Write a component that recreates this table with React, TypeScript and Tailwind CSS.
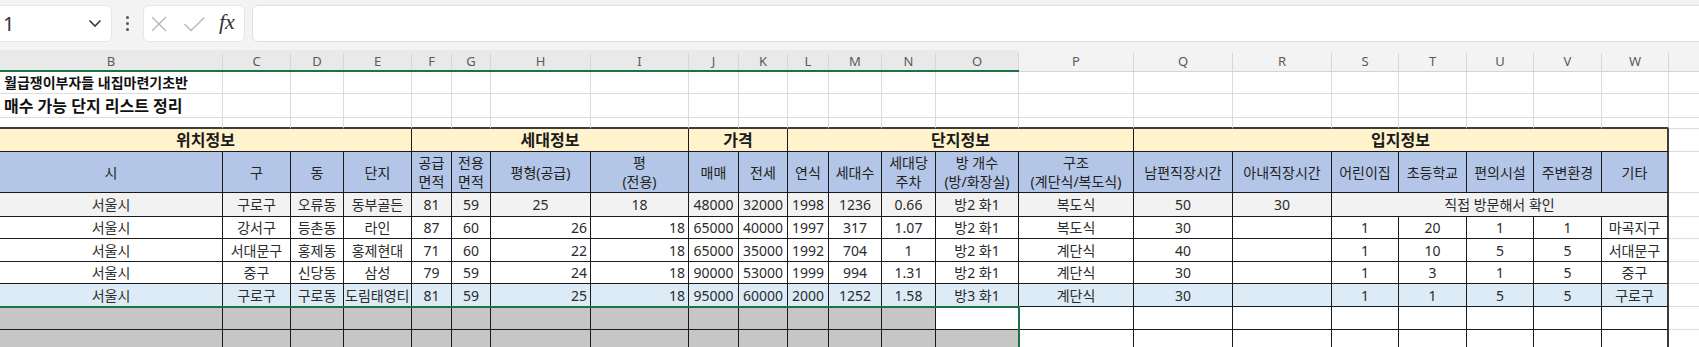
import React from "react";

type Cell = { v?: string; w?: string; align?: "c" | "r" | "l"; cls?: string };

const W = [
  "w-[223px]", "w-[68px]", "w-[53px]", "w-[68px]", "w-[40px]", "w-[39px]", "w-[100px]", "w-[98px]",
  "w-[50px]", "w-[49px]", "w-[41px]", "w-[53px]", "w-[54px]", "w-[83px]", "w-[115px]", "w-[99px]",
  "w-[99px]", "w-[67px]", "w-[68px]", "w-[67px]", "w-[68px]", "w-[67px]",
];
const LETTERS = "BCDEFGHIJKLMNOPQRSTUVW".split("");
const XW = "w-[67px]";

function XCell({ h }: { h: string }) {
  return <div className={`${XW} ${h} shrink-0 border-r border-b border-[#dcdcdc] bg-white`} />;
}

function TableRow({
  cells,
  h,
  bg,
  text = "text-[14px] text-[#2b2b2b]",
  border = "border-[#1a1a1a]",
}: {
  cells: (string | Cell)[];
  h: string;
  bg: string;
  text?: string;
  border?: string;
}) {
  let col = 0;
  return (
    <div className="flex">
      {cells.map((c, i) => {
        const cell: Cell = typeof c === "string" ? { v: c } : c;
        const w = cell.w ?? W[col];
        col += 1;
        const last = i === cells.length - 1;
        const align =
          cell.align === "r" ? "justify-end pr-[3px]" : cell.align === "l" ? "justify-start pl-[1px]" : "justify-center";
        return (
          <div
            key={i}
            className={`${w} ${h} shrink-0 flex items-center ${align} overflow-hidden whitespace-nowrap border-b ${border} ${
              last ? "border-r-2 border-r-[#3c3c3c]" : "border-r"
            } ${cell.cls ?? bg} ${text}`}
          >
            {cell.v}
          </div>
        );
      })}
      <XCell h={h} />
    </div>
  );
}

const dataRows: { bg: string; h: string; cells: (string | Cell)[] }[] = [
  {
    bg: "bg-[#f2f2f2]",
    h: "h-[24px]",
    cells: [
      "서울시", "구로구", "오류동", "동부골든", "81", "59", "25", "18", "48000", "32000", "1998", "1236", "0.66",
      "방2 화1", "복도식", "50", "30", { v: "직접 방문해서 확인", w: "w-[337px]" },
    ],
  },
  {
    bg: "bg-white",
    h: "h-[22px]",
    cells: [
      "서울시", "강서구", "등촌동", "라인", "81".replace("81", "87"), "60", { v: "26", align: "r" }, { v: "18", align: "r" },
      "65000", "40000", "1997", "317", "1.07", "방2 화1", "복도식", "30", "", "1", "20", "1", "1", "마곡지구",
    ],
  },
  {
    bg: "bg-white",
    h: "h-[23px]",
    cells: [
      "서울시", "서대문구", "홍제동", "홍제현대", "71", "60", { v: "22", align: "r" }, { v: "18", align: "r" },
      "65000", "35000", "1992", "704", "1", "방2 화1", "계단식", "40", "", "1", "10", "5", "5", "서대문구",
    ],
  },
  {
    bg: "bg-white",
    h: "h-[22px]",
    cells: [
      "서울시", "중구", "신당동", "삼성", "79", "59", { v: "24", align: "r" }, { v: "18", align: "r" },
      "90000", "53000", "1999", "994", "1.31", "방2 화1", "계단식", "30", "", "1", "3", "1", "5", "중구",
    ],
  },
  {
    bg: "bg-[#ddebf7]",
    h: "h-[23px]",
    cells: [
      "서울시", "구로구", "구로동", { v: "도림태영티", align: "l", cls: "bg-[#ddebf7] text-[13.4px]" }, "81", "59",
      { v: "25", align: "r" }, { v: "18", align: "r" },
      "95000", "60000", "2000", "1252", "1.58", "방3 화1", "계단식", "30", "", "1", "1", "5", "5", "구로구",
    ],
  },
];

function selectedRow(activeWhite: boolean): (string | Cell)[] {
  return W.map((_, i) => {
    if (i <= 13) {
      if (i === 13 && activeWhite) return { v: "", cls: "bg-white" };
      return { v: "", cls: "bg-[#c6c6c6]" };
    }
    return { v: "", cls: "bg-white" };
  });
}

function Toolbar() {
  return (
    <div className="h-[50px] bg-[#f3f3f3] flex items-start pt-[5px]">
      <div className="ml-[-6px] w-[118px] h-[37px] shrink-0 bg-white rounded-md border border-[#e6e6e6] flex items-center pl-[8px] pr-[9px]">
        <span className="text-[20px] text-[#333] font-['Noto_Sans',sans-serif] leading-none">1</span>
        <div className="flex-1" />
        <svg width="14" height="9" viewBox="0 0 14 9" className="shrink-0">
          <polyline points="1.5,1.5 7,7 12.5,1.5" fill="none" stroke="#3a3a3a" strokeWidth="1.6" />
        </svg>
      </div>
      <div className="w-[31px] h-[37px] shrink-0 flex flex-col items-center justify-center gap-[3px]">
        <div className="w-[3px] h-[3px] rounded-full bg-[#555]" />
        <div className="w-[3px] h-[3px] rounded-full bg-[#555]" />
        <div className="w-[3px] h-[3px] rounded-full bg-[#555]" />
      </div>
      <div className="w-[102px] h-[37px] shrink-0 bg-white rounded-md border border-[#e6e6e6] flex items-center">
        <svg width="18" height="16" viewBox="0 0 18 16" className="ml-[6px] shrink-0">
          <line x1="2" y1="1" x2="16" y2="15" stroke="#b9b9b9" strokeWidth="1.4" />
          <line x1="16" y1="1" x2="2" y2="15" stroke="#b9b9b9" strokeWidth="1.4" />
        </svg>
        <svg width="23" height="16" viewBox="0 0 23 16" className="ml-[15px] shrink-0">
          <polyline points="1.5,8 8,14.5 21.5,1.5" fill="none" stroke="#b9b9b9" strokeWidth="1.4" />
        </svg>
        <span className="ml-[13px] text-[22px] italic text-[#333] font-['Liberation_Serif',serif] leading-none pb-[3px]">
          fx
        </span>
      </div>
      <div className="ml-[7px] flex-1 h-[37px] bg-white rounded-md border border-[#e0e0e0] mr-[-8px]" />
    </div>
  );
}

function ColumnHeaders() {
  return (
    <div className="flex bg-[#f3f3f3]">
      {LETTERS.map((l, i) => {
        const sel = i <= 13;
        return (
          <div
            key={l}
            className={`${W[i]} h-[22px] shrink-0 pt-[3px] ${
              sel ? "border-b-2 border-b-[#1e7145] bg-[#e9e9e9]" : "border-b border-b-[#d4d4d4] bg-[#f3f3f3]"
            }`}
          >
            <div className="h-full border-r border-[#d6d6d6] flex items-center justify-center text-[13px] text-[#5a5a5a] font-['Noto_Sans',sans-serif]">
              {l}
            </div>
          </div>
        );
      })}
      <div className={`${XW} h-[22px] shrink-0 pt-[3px] border-b border-b-[#d4d4d4]`}>
        <div className="h-full border-r border-[#d6d6d6]" />
      </div>
    </div>
  );
}

function PlainRow({ h, first, firstCls, bottom }: { h: string; first?: string; firstCls?: string; bottom?: boolean }) {
  return (
    <div className="flex bg-white">
      {W.map((w, i) => (
        <div
          key={i}
          className={`${w} ${h} shrink-0 border-r border-[#dcdcdc] ${
            bottom ? "border-b-2 border-b-[#3c3c3c]" : "border-b"
          } ${i === 0 ? "overflow-visible whitespace-nowrap flex items-center pl-[4px]" : ""}`}
        >
          {i === 0 && first ? <span className={firstCls}>{first}</span> : null}
        </div>
      ))}
      <XCell h={h} />
    </div>
  );
}

export default function App() {
  const subHeaders: (string | Cell)[] = [
    "시", "구", "동", "단지",
    { v: "공급\n면적" }, { v: "전용\n면적" }, "평형(공급)", { v: "평\n(전용)" },
    "매매", "전세", "연식", "세대수", { v: "세대당\n주차" }, { v: "방 개수\n(방/화장실)" }, { v: "구조\n(계단식/복도식)" },
    "남편직장시간", "아내직장시간", "어린이집", "초등학교", "편의시설", "주변환경", "기타",
  ];
  return (
    <div className="w-[1699px] h-[347px] overflow-hidden bg-white font-['Noto_Sans','Noto_Sans_CJK_KR',sans-serif]">
      <Toolbar />
      <ColumnHeaders />
      <div className="relative">
        <PlainRow h="h-[22px]" first="월급쟁이부자들 내집마련기초반" firstCls="text-[14px] font-bold text-[#111]" />
        <PlainRow h="h-[24px]" first="매수 가능 단지 리스트 정리" firstCls="text-[16px] font-bold text-[#111]" />
        <PlainRow h="h-[11px]" bottom />

        {/* group header */}
        <TableRow
          h="h-[23px]"
          bg="bg-[#fff2cc]"
          text="text-[16px] font-bold text-[#1a1a1a]"
          cells={[
            { v: "위치정보", w: "w-[412px]" },
            { v: "세대정보", w: "w-[277px]" },
            { v: "가격", w: "w-[99px]" },
            { v: "단지정보", w: "w-[346px]" },
            { v: "입지정보", w: "w-[535px]" },
          ]}
        />
        {/* sub header */}
        <div className="flex">
          {subHeaders.map((c, i) => {
            const v = typeof c === "string" ? c : c.v ?? "";
            const last = i === subHeaders.length - 1;
            return (
              <div
                key={i}
                className={`${W[i]} h-[41px] shrink-0 flex items-center justify-center text-center whitespace-pre leading-[19px] text-[14px] text-[#222] bg-[#b4c6e7] border-b border-[#1a1a1a] ${
                  last ? "border-r-2 border-r-[#3c3c3c]" : "border-r"
                }`}
              >
                {v}
              </div>
            );
          })}
          <XCell h="h-[41px]" />
        </div>
        {dataRows.map((r, i) => (
          <TableRow key={i} h={r.h} bg={r.bg} cells={r.cells} />
        ))}
        <TableRow h="h-[23px]" bg="bg-white" cells={selectedRow(true)} />
        <TableRow h="h-[23px]" bg="bg-white" cells={selectedRow(false)} />

        {/* selection outline */}
        <div className="absolute left-[-3px] top-[234px] w-[1023px] h-[120px] border-2 border-[#1e7145] pointer-events-none" />
      </div>
    </div>
  );
}
